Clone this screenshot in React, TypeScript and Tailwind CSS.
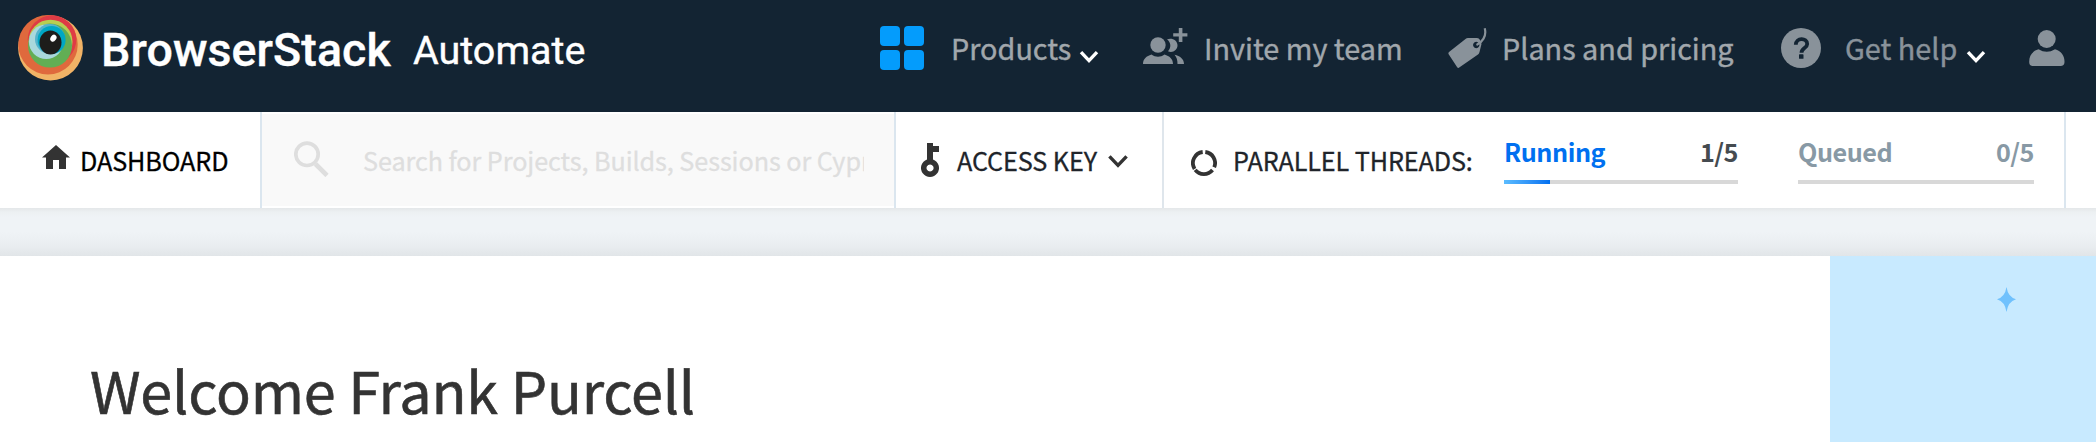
import type { ReactNode } from "react";

const sans = "font-['Noto_Sans_CJK_SC','Noto_Sans',sans-serif]";

function Slot({ className, children }: { className: string; children: ReactNode }) {
  return <span className={`block shrink-0 whitespace-nowrap ${className}`}>{children}</span>;
}

function Logo() {
  return (
    <svg className="ml-[18px] mt-[15px] h-[66px] w-[65px] shrink-0 self-start" viewBox="0 0 65 66">
      <circle cx="32.5" cy="33" r="32.4" fill="#f1b366" />
      <circle cx="30" cy="29.7" r="29.7" fill="#df693d" />
      <circle cx="34" cy="24.6" r="24.3" fill="#df3b45" />
      <circle cx="32.5" cy="26.7" r="22" fill="#b9ce52" />
      <circle cx="32" cy="30.6" r="22" fill="#62ae54" />
      <circle cx="28.2" cy="26.7" r="17.3" fill="#a9d8dc" />
      <circle cx="32" cy="24" r="15" fill="#55b3cc" />
      <circle cx="33.6" cy="25" r="14" fill="#00a7c4" />
      <ellipse cx="32.5" cy="27.6" rx="11" ry="12" fill="#1d1d1b" />
      <ellipse cx="35.4" cy="23.2" rx="2.8" ry="3.7" fill="#fff" transform="rotate(35 35.4 23.2)" />
    </svg>
  );
}

function Chevron({ className, stroke }: { className: string; stroke: number }) {
  return (
    <svg className={`shrink-0 ${className}`} viewBox="0 0 20 14" fill="none" stroke="currentColor" strokeWidth={stroke}>
      <path d="M2 2.2 10 10.6 18 2.2" />
    </svg>
  );
}

function Header() {
  return (
    <header className="flex h-[112px] items-center bg-[#132433] pb-[17px] text-[28.8px] leading-[40px] text-[#a1a7ac] [-webkit-text-stroke:0.4px_currentColor]">
      <Logo />
      <Slot className="ml-[18px] mt-[5px] w-[312px] font-['Roboto',sans-serif] text-[46.500px] font-medium leading-[54px] tracking-[0.1px] text-white">
        BrowserStack
      </Slot>
      <Slot className="mt-[7px] w-[467px] font-['Roboto',sans-serif] text-[39.500px] leading-[48px] text-white">Automate</Slot>

      <div className="grid h-[44px] w-[44px] shrink-0 grid-cols-2 gap-[4px]">
        <i className="rounded-[4px] bg-[#049cfc]" />
        <i className="rounded-[4px] bg-[#049cfc]" />
        <i className="rounded-[4px] bg-[#049cfc]" />
        <i className="rounded-[4px] bg-[#049cfc]" />
      </div>
      <Slot className="ml-[27px] w-[128px]">Products</Slot>
      <Chevron className="mt-[19px] h-[14px] w-[20px] text-white" stroke={3.4} />

      <svg className="ml-[44px] h-[40px] w-[46px] shrink-0" viewBox="0 0 46 40" fill="#89929a">
        <circle cx="15" cy="17" r="7.7" />
        <path d="M0 36c0-5 3.500-8 8.500-9.500 4 3 9 3 13 0C26.500 28 30 31 30 36Z" />
        <path d="M24 11.300c5-2 10.500 1 10.500 6s-5 8-9.500 6c3.500-4 3-8.500-1-12Z" />
        <path d="M31.500 26.800C37 28 41 31 41 36h-6.500c0-4-.800-6.500-3-9.200Z" />
        <path d="M35.800 0h3.600v5.200h5v3.400h-5V14h-3.600V8.600h-5.600V5.200h5.600Z" />
      </svg>
      <Slot className="ml-[15px] w-[244px]">Invite my team</Slot>

      <svg className="h-[40px] w-[40px] shrink-0" viewBox="0 0 40 40">
        <path
          fillRule="evenodd"
          fill="#89929a"
          d="M20 10h9q2 0 3 2l1.500 4-2 8q-.300 1.500-1.500 2.500L10.500 40Q9.500 40 9 39L.500 26Q0 25 1 24L17.500 11Q18.500 10 20 10ZM28.200 13.800a3.200 3.200 0 1 0 .1 0Z"
        />
        <path d="M28.500 17C34 14.500 39 8 36.700.300" fill="none" stroke="#89929a" strokeWidth="2.200" />
      </svg>
      <Slot className="ml-[14px] w-[279px]">Plans and pricing</Slot>

      <svg className="h-[40px] w-[40px] shrink-0" viewBox="0 0 40 40">
        <circle cx="20" cy="20" r="20" fill="#89929a" />
        <path d="M14.800 16.800c0-7.500 11.400-7.300 11.400-.8 0 4.200-5.700 4-5.700 8.800" fill="none" stroke="#132433" strokeWidth="3.800" />
        <rect x="18" y="26.300" width="4.500" height="4.500" rx=".6" fill="#132433" />
      </svg>
      <Slot className="ml-[24px] w-[121px] text-[#89929a]">Get help</Slot>
      <Chevron className="mt-[19px] h-[14px] w-[20px] text-white" stroke={3.4} />
      <svg className="ml-[43px] h-[36px] w-[36px] shrink-0" viewBox="0 0 36 36" fill="#89929a">
        <circle cx="17.700" cy="9" r="9" />
        <path d="M9.500 19.300q8.300 5 16.500 0C32 21 35.500 25.500 35.500 31.500 35.500 35 34 36 31 36H4.500C1.500 36 .200 35 .200 31.500.200 25.500 3.500 21 9.500 19.300Z" />
      </svg>
    </header>
  );
}

type MeterProps = { label: string; value: string; className: string; labelColor: string; valueColor: string; percent: number };

function Meter({ label, value, className, labelColor, valueColor, percent }: MeterProps) {
  return (
    <div className={`mt-[10px] shrink-0 self-start ${className}`}>
      <div className="flex h-[58px] items-center justify-between font-bold tracking-[-0.45px] [-webkit-text-stroke:0px]">
        <span className={labelColor}>{label}</span>
        <span className={valueColor}>{value}</span>
      </div>
      <div className="h-[4px] bg-[#d8d8d8]">
        <div className="h-full bg-gradient-to-r from-[#5bbcff] to-[#0070f0]" style={{ width: `${percent}%` }} />
      </div>
    </div>
  );
}

function Toolbar() {
  return (
    <nav className="flex h-[96px] items-center bg-white text-[25.2px] leading-[36px] text-[#20242a] [-webkit-text-stroke:0.3px_currentColor]">
      <div className="flex h-full w-[262px] shrink-0 items-center border-r-2 border-[#dbe6ef] text-black">
        <svg className="ml-[42px] mt-[-6px] h-[24px] w-[28px] shrink-0" viewBox="0 0 28 24" fill="#333">
          <path d="M14 0 28 12.500H24V24H17V15H11V24H4V12.500H0Z" />
        </svg>
        <Slot className="ml-[10px] mt-[-1px] tracking-[-0.1px]">DASHBOARD</Slot>
      </div>
      <div className="flex h-full w-[634px] shrink-0 border-r-2 border-[#dbe6ef] py-[2px]">
        <div className="flex w-full items-center bg-[#f9f9f9] text-[#dedede]">
          <svg className="ml-[32px] mt-[-2px] h-[36px] w-[35px] shrink-0" viewBox="0 0 35 36" fill="none" stroke="currentColor">
            <circle cx="13" cy="13.300" r="11.200" strokeWidth="3.700" />
            <path d="M21.500 23 33 34.500" strokeWidth="4.600" />
          </svg>
          <Slot className="ml-[34px] mt-[-1px] w-[501px] overflow-hidden tracking-[-0.07px]">Search for Projects, Builds, Sessions or Cypress</Slot>
        </div>
      </div>
      <div className="flex h-full w-[268px] shrink-0 items-center border-r-2 border-[#dfe6ec]">
        <svg className="ml-[25px] h-[34px] w-[18px] shrink-0" viewBox="0 0 18 34" fill="#333">
          <path
            fillRule="evenodd"
            d="M6 0h6v3h6v6h-6v7.500a9 9 0 1 1-6 0ZM9 21.500a3.500 3.500 0 1 0 .1 0Z"
          />
        </svg>
        <Slot className="ml-[18px] mt-[-1px] w-[150px] tracking-[-0.1px]">ACCESS KEY</Slot>
        <Chevron className="mt-[3px] h-[15px] w-[22px] text-[#333]" stroke={3.2} />
      </div>
      <div className="flex h-full w-[902px] shrink-0 items-center border-r-2 border-[#dbe6ef]">
        <svg className="ml-[27px] mt-[6px] h-[26px] w-[26px] shrink-0" viewBox="0 0 26 26" fill="none" stroke="#333" strokeWidth="3.800">
          <path d="M14.300 2A11.100 11.100 0 0 1 23.200 17.300" />
          <path d="M21.500 20A11.100 11.100 0 0 1 4.200 19.800" />
          <path d="M3.600 18.900A11.100 11.100 0 0 1 11.700 2" />
        </svg>
        <Slot className="ml-[16px] mt-[-1px] w-[271px] tracking-[-0.1px]">PARALLEL THREADS:</Slot>
        <Meter label="Running" value="1/5" className="w-[234px]" labelColor="text-[#0070f0]" valueColor="text-[#454b50]" percent={19.6} />
        <Meter label="Queued" value="0/5" className="ml-[60px] w-[236px]" labelColor="text-[#8899a5]" valueColor="text-[#8899a5]" percent={0} />
      </div>
    </nav>
  );
}

export default function App() {
  return (
    <div className={`flex h-[442px] w-[2096px] flex-col overflow-hidden bg-[#eff3f6] ${sans}`}>
      <Header />
      <Toolbar />
      <div className="h-[48px] shrink-0 bg-[linear-gradient(to_bottom,#e4e7e9_0,#ecf0f2_4px,#eff3f6_9px,#eff3f6_24px,#e9edf0_38px,#e1e5e8_48px)]" />
      <main className="flex flex-1 bg-white">
        <h1 className="w-[1830px] shrink-0 pl-[90px] pt-[91px] text-[57.6px] font-normal leading-[84px] tracking-[-0.2px] text-[#333] [-webkit-text-stroke:0.6px_currentColor]">
          Welcome Frank Purcell
        </h1>
        <aside className="flex-1 bg-[#c8eaff] pl-[167px] pt-[31px]">
          <svg className="h-[25px] w-[19px]" viewBox="0 0 19 25" fill="#70c1fd">
            <path d="M9.500 0Q11 10 19 12.200 11 14.500 9.500 25 8 14.500 0 12.200 8 10 9.500 0Z" />
          </svg>
        </aside>
      </main>
    </div>
  );
}
